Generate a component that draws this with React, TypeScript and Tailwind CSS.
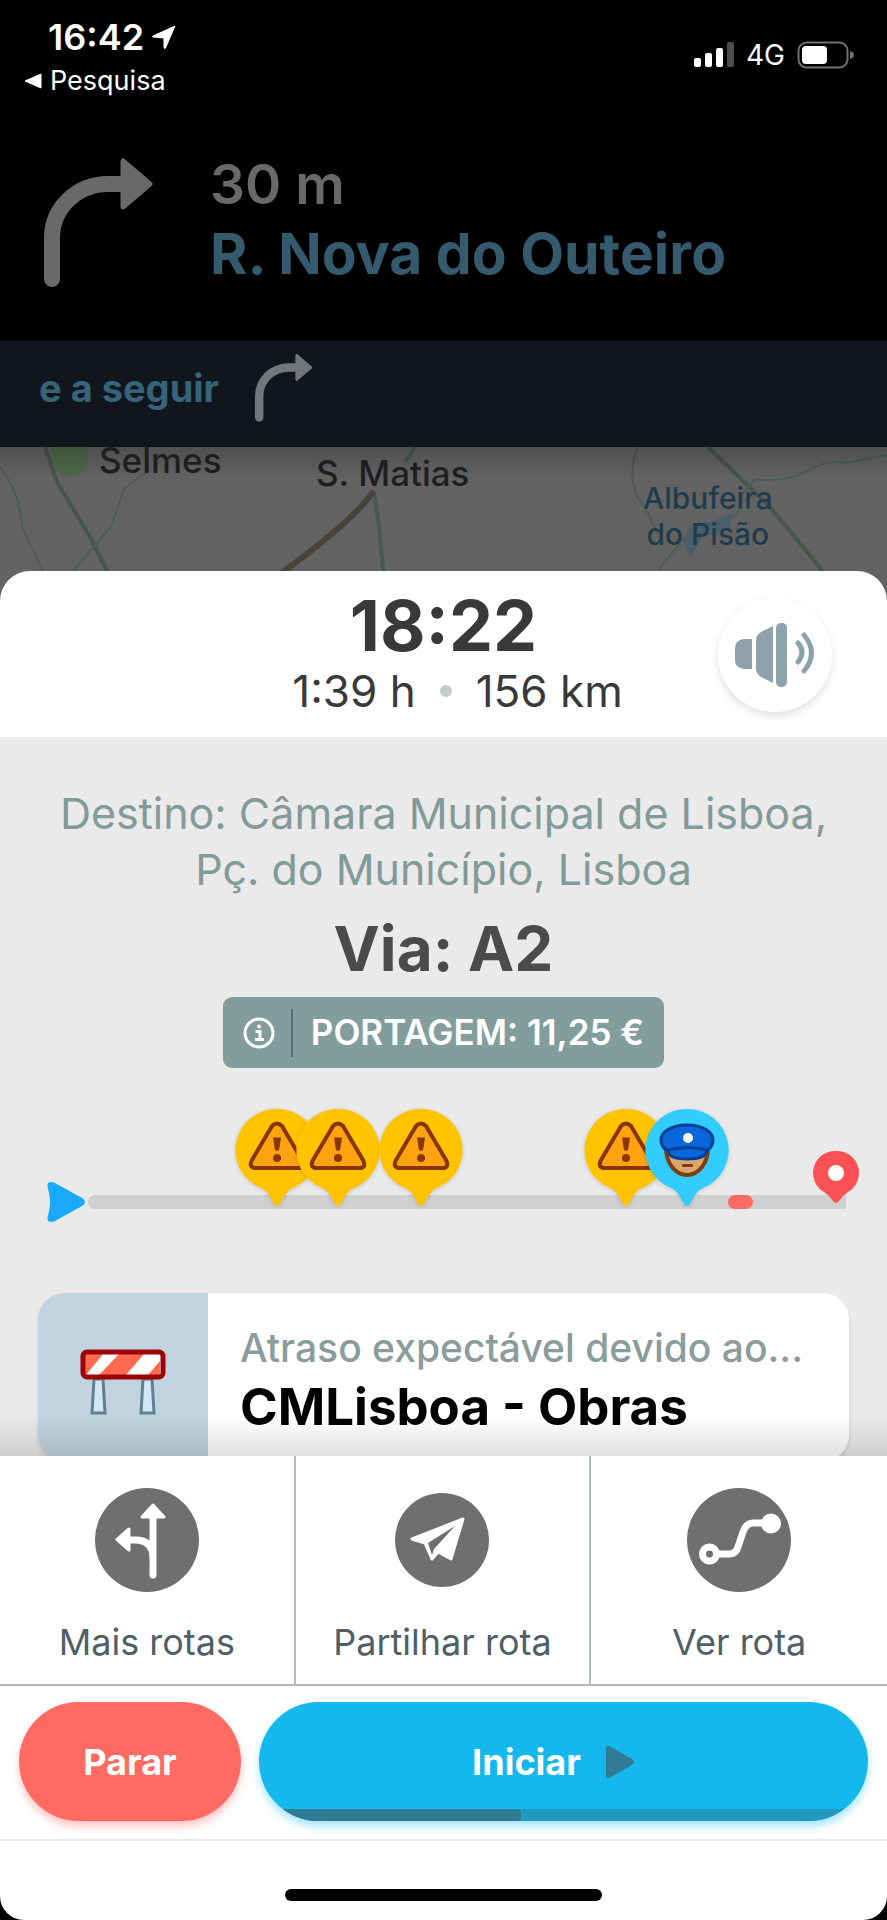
import type { ReactNode } from "react";

type PinKind = "hazard" | "police";

const pins: { at: number; kind: PinKind }[] = [
  { at: 277, kind: "hazard" },
  { at: 338, kind: "hazard" },
  { at: 421, kind: "hazard" },
  { at: 626, kind: "hazard" },
  { at: 687, kind: "police" },
];

// Route positions are stored on an 887-unit wide track.
const TRACK = 887;
const pct = (n: number) => `${(n / TRACK) * 100}%`;

function TurnRight({ className }: { className: string }) {
  return (
    <svg viewBox="0 0 110 130" className={className} aria-hidden="true">
      <path
        d="M8 121V80A56 54 0 0 1 64 26H80"
        fill="none"
        stroke="currentColor"
        strokeWidth="16"
        strokeLinecap="round"
      />
      <path
        d="M79 3v46L106 26z"
        fill="currentColor"
        stroke="currentColor"
        strokeWidth="5"
        strokeLinejoin="round"
      />
    </svg>
  );
}

function StatusBar() {
  return (
    <div className="flex justify-between pl-6 pr-8 text-white">
      <div className="pt-4">
        <div className="flex items-center gap-2 pl-6 text-[36px] leading-[42px] font-semibold">
          16:42
          <svg viewBox="0 0 24 24" className="size-6" aria-hidden="true">
            <path d="M23 1 1 11q-1 1 0 1l11 1 0 10q1 1 1.500 0z" fill="currentColor" stroke="currentColor" strokeLinejoin="round" />
          </svg>
        </div>
        <a href="#pesquisa" className="flex items-center gap-2 text-[27px] leading-[46px]">
          <svg viewBox="0 0 18 16" className="h-4 w-[18px]" aria-hidden="true">
            <path d="M17 1v14L1 8z" fill="currentColor" stroke="currentColor" strokeLinejoin="round" />
          </svg>
          Pesquisa
        </a>
      </div>
      <div className="flex h-[110px] items-center gap-3 text-[28px] leading-8">
        <svg viewBox="0 0 40 26" className="h-[26px] w-10" fill="currentColor" aria-hidden="true">
          <rect x="0" y="16" width="7" height="9" rx="2" />
          <rect x="11" y="11" width="7" height="14" rx="2" />
          <rect x="22" y="6" width="7" height="19" rx="2" />
          <rect x="33" y="0" width="7" height="25" rx="2" opacity=".3" />
        </svg>
        4G
        <svg viewBox="0 0 58 28" className="h-7 w-[58px]" aria-hidden="true">
          <rect x="1.500" y="1.500" width="49" height="25" rx="8" fill="none" stroke="#707070" strokeWidth="2" />
          <rect x="5" y="5" width="25" height="18" rx="4" fill="#fff" />
          <path d="M53 10q4 1 4 4t-4 4z" fill="#707070" />
        </svg>
      </div>
    </div>
  );
}

function MapStrip() {
  return (
    <div className="relative h-[164px] bg-[#636363]">
      <svg
        viewBox="0 0 887 164"
        preserveAspectRatio="none"
        className="absolute inset-0 size-full"
        fill="none"
        aria-hidden="true"
      >
        <ellipse cx="70" cy="10" rx="18" ry="20" fill="#4f6a49" />
        <path d="M45 0 57 35 90 90 113 135" stroke="#46564c" strokeWidth="4" />
        <path d="M0 20q20 25 22 60l24 50M150 22l-26 20-12 36-50 60" stroke="#4d5c57" strokeWidth="2" />
        <path d="M415 0 405 15M374 46q6 34 10 90" stroke="#475952" strokeWidth="4" />
        <path d="M374 44Q350 78 262 140" stroke="#47443a" strokeWidth="6" />
        <path d="M708 0 770 60 836 140" stroke="#46564c" strokeWidth="4" />
        <path d="M637 0q-12 40 8 60l12 26M887 8l-40 8q-20-4-40 8t-52 8l-12 14-6 22-50 20-25 30-8 20" stroke="#4d5c57" strokeWidth="2" />
        <path d="M683 96l8-18 22-4 20-8-4 16-26 8-12 20z" fill="#4b5f6a" />
      </svg>
      <div className="absolute inset-x-0 top-0 h-8 bg-linear-to-b from-black/20 to-transparent" />
      <span className="absolute top-0 left-[99px] text-[35px] leading-[26px] font-medium text-[#1e1e1e]">Selmes</span>
      <span className="absolute top-2 left-[316px] text-[35px] leading-9 font-medium text-[#1e1e1e]">S. Matias</span>
      <span className="absolute top-[33px] left-[643px] text-center text-[30px] leading-9 font-medium text-[#1f3c4d]">
        Albufeira
        <br />
        do Pisão
      </span>
    </div>
  );
}

function SpeakerIcon() {
  return (
    <svg viewBox="0 0 80 66" className="h-[66px] w-20" fill="#8ca3ab" aria-hidden="true">
      <path d="M17 17v30H9Q0 46 0 38V26q0-8 9-9z" />
      <path d="M21 19q0-6 5-9l12-6v57l-12-6q-5-3-5-9z" />
      <rect x="41" y="1" width="11" height="64" rx="5" />
      <path d="M63 21q8 9 0 19M69 13q15 18 0 36" fill="none" stroke="#8ca3ab" strokeWidth="5" strokeLinecap="round" />
    </svg>
  );
}

function Pin({ kind }: { kind: PinKind }) {
  return (
    <svg viewBox="0 0 84 100" className="h-[100px] w-[84px] drop-shadow-sm" aria-hidden="true">
      <path
        d="M42 1a41 41 0 0 1 16 79c-8 4-9 9-13 16q-3 4-6 0c-4-7-5-12-13-16A41 41 0 0 1 42 1z"
        fill={kind === "hazard" ? "#ffc400" : "#33ccff"}
      />
      {kind === "hazard" ? (
        <>
          <path d="M37 18q5-5 10 0l20 34q4 8-4 8H21q-8 0-4-8z" fill="#ffa311" stroke="#8a3500" strokeWidth="4" strokeLinejoin="round" />
          <path d="M38 29.500h8l-2 13h-4z" fill="#8a3500" />
          <circle cx="42" cy="50" r="4" fill="#8a3500" />
        </>
      ) : (
        <>
          <path d="M21 40c0 16 10 27 21 27s21-11 21-27z" fill="#dba66c" stroke="#803d0f" strokeWidth="4" />
          <rect x="37" y="56" width="11" height="3" rx="1" fill="#803d0f" />
          <path d="M42 17c16 0 26 7 26 15 0 7-4 9-6 11-1 6-10 8-20 8s-18-2-19-8c-3-2-7-4-7-11 0-8 10-15 26-15z" fill="#0865dc" stroke="#053f93" strokeWidth="3" />
          <path d="M23 42q19-5 39 0" fill="none" stroke="#053f93" strokeWidth="3" />
          <circle cx="43" cy="30" r="5" fill="#fff" />
        </>
      )}
    </svg>
  );
}

function RouteTimeline() {
  return (
    <div className="relative mt-8 h-[123px]">
      <div
        className="absolute top-[95px] h-[14px] rounded-l-full bg-[#d0d0d0]"
        style={{ left: pct(88), width: pct(758) }}
      />
      <div
        className="absolute top-[95px] h-[14px] rounded-full bg-[#ff6b63]"
        style={{ left: pct(728), width: pct(25) }}
      />
      <svg viewBox="0 0 42 44" className="absolute top-20 h-11 w-[42px]" style={{ left: pct(45) }} aria-hidden="true">
        <path d="M2 7Q1 0 9 2l29 16q5 4 0 8L9 42q-8 2-7-5 5-15 0-30z" fill="#1aa9fb" stroke="#dff2ff" strokeWidth="1" />
      </svg>
      {pins.map((pin) => (
        <div key={pin.at} className="absolute top-2 -translate-x-1/2" style={{ left: pct(pin.at) }}>
          <Pin kind={pin.kind} />
        </div>
      ))}
      <svg viewBox="0 0 46 54" className="absolute top-[50px] h-[54px] w-[46px] -translate-x-1/2" style={{ left: pct(836) }} aria-hidden="true">
        <path
          d="M23 1a22 22 0 0 1 12 41q-5 3-9 9-3 4-6 0-4-6-9-9A22 22 0 0 1 23 1z"
          fill="#fb5155"
        />
        <circle cx="23" cy="23" r="8" fill="#fff" />
      </svg>
    </div>
  );
}

function BarrierIcon() {
  return (
    <svg viewBox="0 0 86 66" className="h-[66px] w-[86px]" aria-hidden="true">
      <path d="M14 30h9l2 34H12zM63 30h9l2 34H61z" fill="#cfe8f5" stroke="#617f8c" strokeWidth="3" />
      <rect x="3" y="3" width="80" height="25" rx="3" fill="#fff" />
      <path d="M5 5h18L6 26H3zM39 5h25L46 26H19zM80 12v14H68z" fill="#ff6a50" />
      <rect x="3" y="3" width="80" height="25" rx="4" fill="none" stroke="#9c0208" strokeWidth="5" />
    </svg>
  );
}

function RouteAction({ label, children }: { label: string; children: ReactNode }) {
  return (
    <button type="button" className="flex flex-col items-center pt-8 text-[36px] leading-10 text-[#4f5f66]">
      <span className="flex h-[104px] items-center">{children}</span>
      <span className="mt-[30px]">{label}</span>
    </button>
  );
}

export default function App() {
  return (
    <div className="flex min-h-screen flex-col bg-black font-['Inter','Liberation_Sans',sans-serif]">
      <header>
        <StatusBar />
        <div className="flex gap-14 px-11 pt-12">
          <TurnRight className="h-[130px] w-[110px] shrink-0 text-[#696969]" />
          <div className="font-semibold">
            <p className="text-[55px] leading-[52px] text-[#696969]">30 m</p>
            <h1 className="mt-2 text-[57px] leading-[72px] font-bold text-[#35596d]">R. Nova do Outeiro</h1>
          </div>
        </div>
      </header>

      <div className="mt-[51px] flex h-[106px] shrink-0 items-center gap-9 bg-[#11151c] px-[39px] pb-3 text-[38px] font-bold text-[#366479]">
        e a seguir
        <TurnRight className="h-[70px] w-[58px] text-[#747679]" />
      </div>

      <MapStrip />

      <main className="relative -mt-10 flex flex-1 flex-col overflow-hidden rounded-t-[30px] rounded-b-[24px] bg-white">
        <div className="relative h-[166px] pt-5 text-center text-[#393939]">
          <p className="text-[70px] leading-[70px] font-bold">18:22</p>
          <div className="flex items-center justify-center gap-6 pl-7 text-[44px] leading-[60px]">
            1:39 h
            <span className="size-3 rounded-full bg-[#c3cdd1]" />
            156 km
          </div>
          <button
            type="button"
            aria-label="Som"
            className="absolute top-[27px] right-[55px] flex size-[114px] items-center justify-center rounded-full bg-white shadow-[0_4px_8px_rgba(0,0,0,0.12)]"
          >
            <SpeakerIcon />
          </button>
        </div>

        <section className="relative h-[719px] overflow-hidden bg-[#eaeaea] pt-12">
          <p className="px-10 text-center text-[43px] leading-[56px] text-[#829a98]">
            Destino: Câmara Municipal de Lisboa, Pç. do Município, Lisboa
          </p>
          <h2 className="mt-3 text-center text-[62px] leading-[80px] font-bold text-[#4b4b4b]">Via: A2</h2>
          <div className="mx-auto mt-2 flex h-[71px] w-fit items-center rounded-[9px] bg-[#839d9c] px-5 text-[35px] font-semibold text-white">
            <svg viewBox="0 0 32 32" className="size-8" fill="none" stroke="currentColor" aria-hidden="true">
              <circle cx="16" cy="16" r="14" strokeWidth="3" />
              <circle cx="16" cy="9.500" r="2" fill="currentColor" stroke="none" />
              <path d="M12.500 14.500H17V22M12 22.500h9" strokeWidth="3" />
            </svg>
            <span className="mr-[18px] ml-4 h-12 w-[2px] bg-[#4f7270]" />
            PORTAGEM: 11,25 €
          </div>

          <RouteTimeline />

          <article className="mx-[38px] mt-[70px] flex h-[168px] overflow-hidden rounded-[26px] bg-white shadow-md">
            <div className="flex w-[170px] shrink-0 justify-center bg-[#c0d3df] pt-14">
              <BarrierIcon />
            </div>
            <div className="min-w-0 pt-8 pl-8">
              <p className="truncate text-[39px] leading-[46px] font-medium text-[#8a9c9b]">Atraso expectável devido ao...</p>
              <h3 className="truncate text-[51px] leading-[72px] font-bold text-black">CMLisboa - Obras</h3>
            </div>
          </article>
          <div className="absolute inset-x-0 bottom-0 h-10 bg-linear-to-b from-transparent to-black/12" />
        </section>

        <nav className="grid h-[230px] grid-cols-3 divide-x-2 divide-[#b3bbbd] border-b-2 border-[#b3b9ba]">
          <RouteAction label="Mais rotas">
            <svg viewBox="0 0 104 104" className="size-[104px]" aria-hidden="true">
              <circle cx="52" cy="52" r="52" fill="#6f6f6f" />
              <path d="M58 87V26M58 70q0-18-18-18H32" fill="none" stroke="#fff" strokeWidth="7" strokeLinecap="round" />
              <path d="M58 17 69 29H47zM22 51.500 34 41v21z" fill="#fff" stroke="#fff" strokeWidth="3" strokeLinejoin="round" />
            </svg>
          </RouteAction>
          <RouteAction label="Partilhar rota">
            <svg viewBox="0 0 94 94" className="size-[94px]" aria-hidden="true">
              <circle cx="47" cy="47" r="47" fill="#6f6f6f" />
              <path d="M68 26 56 66 43 59 37 66 30 50 17 46z" fill="#fff" stroke="#fff" strokeWidth="3" strokeLinejoin="round" />
              <path d="M60 33 33 50l4 12 2-6z" fill="#6f6f6f" />
            </svg>
          </RouteAction>
          <RouteAction label="Ver rota">
            <svg viewBox="0 0 104 104" className="size-[104px]" aria-hidden="true">
              <circle cx="52" cy="52" r="52" fill="#6f6f6f" />
              <path d="M22 66h20q7 0 9-7l5-15q3-9 10-9h18" fill="none" stroke="#fff" strokeWidth="7" />
              <circle cx="84" cy="35.500" r="10" fill="#fff" />
              <circle cx="22.500" cy="66" r="7" fill="#6f6f6f" stroke="#fff" strokeWidth="7" />
            </svg>
          </RouteAction>
        </nav>

        <div className="flex gap-[18px] border-b-2 border-[#ebebeb] px-[19px] pt-4 pb-[18px] text-[36px] font-bold text-white">
          <button
            type="button"
            className="h-[119px] w-[222px] shrink-0 rounded-full bg-[#ff6b63] shadow-[0_5px_8px_rgba(255,107,99,0.4)]"
          >
            Parar
          </button>
          <button
            type="button"
            className="relative flex h-[119px] flex-1 items-center justify-center gap-6 overflow-hidden rounded-full bg-[#14b8ec] pr-5 shadow-[0_5px_8px_rgba(20,184,236,0.4)]"
          >
            Iniciar
            <svg viewBox="0 0 30 34" className="h-[34px] w-[30px]" aria-hidden="true">
              <path d="M1 3q0-3 3-2l23 13q4 3 0 6L4 33q-3 1-3-2z" fill="#2f7b93" />
            </svg>
            <span className="absolute inset-x-0 bottom-0 h-3 bg-[#2399c2]">
              <span className="block h-full w-[43%] rounded-r-sm bg-[#2f7b93]" />
            </span>
          </button>
        </div>

        <div className="flex h-[79px] justify-center pt-12">
          <span className="h-3 w-[317px] rounded-full bg-black" />
        </div>
      </main>
    </div>
  );
}
